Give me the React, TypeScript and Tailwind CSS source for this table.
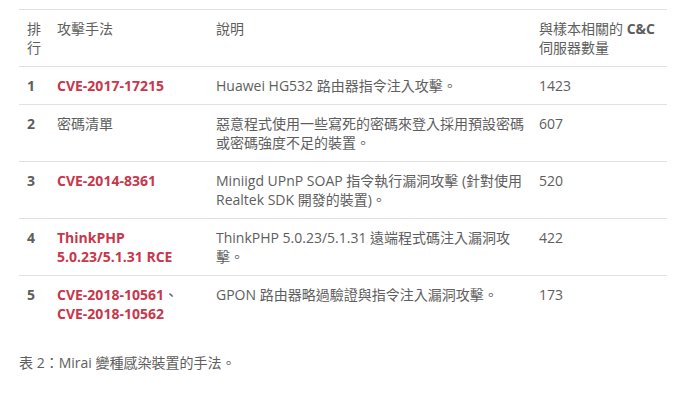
import React from 'react';

const red = 'font-bold text-[#c8374b]';

const rows = [
  {
    rank: '1',
    method: <span className={red}>CVE-2017-17215</span>,
    desc: 'Huawei HG532 路由器指令注入攻擊。',
    count: '1423',
  },
  {
    rank: '2',
    method: <span>密碼清單</span>,
    desc: '惡意程式使用一些寫死的密碼來登入採用預設密碼或密碼強度不足的裝置。',
    count: '607',
  },
  {
    rank: '3',
    method: <span className={red}>CVE-2014-8361</span>,
    desc: 'Miniigd UPnP SOAP 指令執行漏洞攻擊 (針對使用 Realtek SDK 開發的裝置)。',
    count: '520',
  },
  {
    rank: '4',
    method: <span className={red}>ThinkPHP 5.0.23/5.1.31 RCE</span>,
    desc: 'ThinkPHP 5.0.23/5.1.31 遠端程式碼注入漏洞攻擊。',
    count: '422',
  },
  {
    rank: '5',
    method: (
      <span>
        <span className={red}>CVE-2018-10561</span>、<br />
        <span className={red}>CVE-2018-10562</span>
      </span>
    ),
    desc: 'GPON 路由器略過驗證與指令注入漏洞攻擊。',
    count: '173',
  },
];

export default function App() {
  return (
    <div
      className="w-[687px] h-[393px] bg-white pt-[9px] pl-[19px] text-[14px] leading-[19px] text-[#5e5e5e]"
      style={{ fontFamily: '"Open Sans", "Noto Sans CJK TC", sans-serif' }}
    >
      <table className="table-fixed border-collapse w-[648px]">
        <colgroup>
          <col className="w-[30px]" />
          <col className="w-[159px]" />
          <col className="w-[323px]" />
          <col className="w-[136px]" />
        </colgroup>
        <thead>
          <tr className="border-t border-b border-[#e2e2e2] align-top text-left">
            <th className="font-normal pl-2 pr-[6px] py-[9px]">排行</th>
            <th className="font-normal pl-2 pr-[6px] py-[9px]">攻擊手法</th>
            <th className="font-normal pl-2 pr-[6px] py-[9px]">說明</th>
            <th className="font-normal pl-2 pr-[6px] py-[9px]">
              與樣本相關的 <span className="font-bold">C&amp;C</span> 伺服器數量
            </th>
          </tr>
        </thead>
        <tbody>
          {rows.map((r, i) => (
            <tr
              key={r.rank}
              className={`align-top ${i < rows.length - 1 ? 'border-b border-[#e2e2e2]' : ''}`}
            >
              <td className="pl-2 pr-[6px] py-[9px] font-bold">{r.rank}</td>
              <td className="pl-2 pr-[6px] py-[9px]">{r.method}</td>
              <td className="pl-2 pr-[6px] py-[9px]">{r.desc}</td>
              <td className="pl-2 pr-[6px] py-[9px]">{r.count}</td>
            </tr>
          ))}
        </tbody>
      </table>
      <p className="mt-[21px]">表 2：Mirai 變種感染裝置的手法。</p>
    </div>
  );
}
